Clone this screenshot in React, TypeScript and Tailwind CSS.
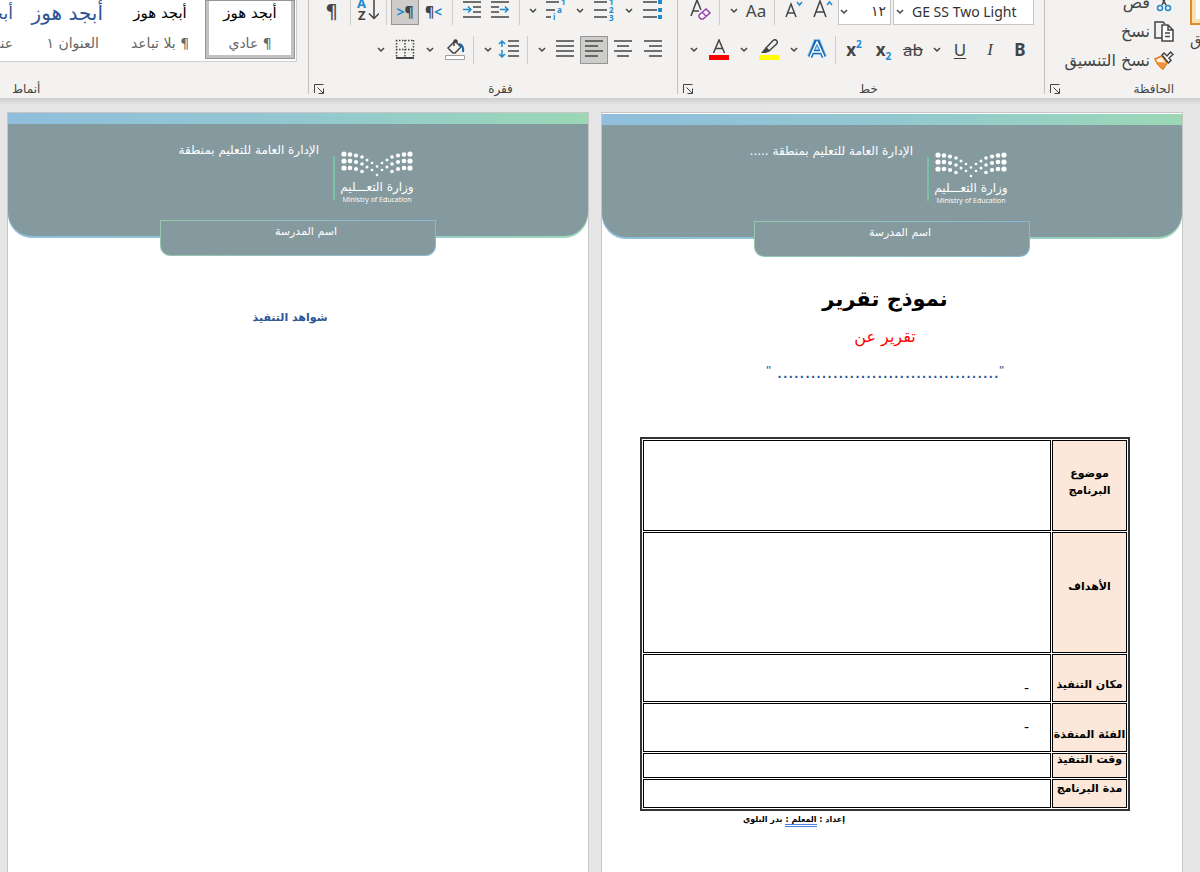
import React from 'react';

const DARK = '#444444';
const BLUE = '#1e8bcd';

interface IconProps {
    children: React.ReactNode;
    w?: number;
    h?: number;
}

const Icon: React.FC<IconProps> = ({ children, w = 22, h = 22 }) => (
    <svg width={w} height={h} viewBox={`0 0 ${w} ${h}`} fill="none" stroke={DARK} strokeWidth="1.5" className="shrink-0" aria-hidden="true">
        {children}
    </svg>
);

const Chevron = () => (
    <svg width="8" height="6" viewBox="0 0 8 6" fill="none" stroke={DARK} strokeWidth="1.5" className="shrink-0" aria-hidden="true">
        <path d="M1 1l3 3 3-3" />
    </svg>
);

interface ToolProps {
    label: string;
    className: string;
    active?: boolean;
    children: React.ReactNode;
}

const Tool: React.FC<ToolProps> = ({ label, className, active, children }) => (
    <button
        type="button"
        aria-label={label}
        aria-pressed={active}
        className={`flex h-7 shrink-0 items-center justify-center ${active ? 'border border-[#969696] bg-[#cfcdcb]' : ''} ${className}`}
    >
        {children}
    </button>
);

const Divider: React.FC<{ className: string }> = ({ className }) => (
    <span className={`flex h-7 shrink-0 justify-center ${className}`}>
        <span className="w-px bg-[#d0cecc]" />
    </span>
);

const Launcher: React.FC<{ label: string }> = ({ label }) => (
    <button type="button" aria-label={label} className="ml-[5px] shrink-0">
        <svg width="10" height="10" viewBox="0 0 10 10" fill="none" stroke={DARK} aria-hidden="true">
            <path d="M.5 9V.5H9.5M3.500 3.500L9 9M9.500 4.500V9.500H4.500" />
        </svg>
    </button>
);

interface GroupProps {
    title: string;
    className: string;
    titleClass: string;
    launcher?: boolean;
    children: React.ReactNode;
}

const Group: React.FC<GroupProps> = ({ title, className, titleClass, launcher, children }) => (
    <section className={`flex flex-col justify-between ${className}`} aria-label={title}>
        {children}
        <div className="flex h-[10px] items-center text-[12px] leading-[10px] text-[#444444]">
            <span className={`flex-1 ${titleClass}`}>{title}</span>
            {launcher && <Launcher label={title} />}
        </div>
    </section>
);

const AlignIcon: React.FC<{ lines: number[][] }> = ({ lines }) => (
    <Icon>
        {lines.map(([from, to], i) => (
            <path key={i} d={`M${from} ${2 + i * 5}H${to}`} />
        ))}
    </Icon>
);

const Clipboard = () => (
    <Group title="الحافظة" className="w-[156px] border-l border-[#c3c1bf]" titleClass="pr-[26px]" launcher>
        <div className="flex justify-start">
            <button type="button" className="flex w-[10px] shrink-0 flex-col items-start overflow-hidden text-[15px] leading-5 text-[#444444]">
                <span className="h-[25px] w-full shrink-0 border-b-2 border-l-2 border-[#e08a2e] bg-[#fbe3b0] pb-1 pl-1">
                    <span className="block h-full bg-white" />
                </span>
                <span className="mt-[6px] self-end whitespace-nowrap" dir="ltr">
                    ق
                </span>
            </button>
            <div className="-mt-3 mr-4 flex flex-col text-[16px] text-[#444444]">
                <button type="button" className="flex h-[29px] items-center gap-1 whitespace-nowrap">
                    <Icon w={20}>
                        <path d="M5 1l7 12M14 1L8 13" />
                        <circle cx="6" cy="16" r="2.500" stroke={BLUE} />
                        <circle cx="14" cy="16" r="2.500" stroke={BLUE} />
                    </Icon>
                    قص
                </button>
                <button type="button" className="flex h-[29px] items-center gap-1 whitespace-nowrap">
                    <Icon w={20}>
                        <path d="M8 17H1V1h8l2 2" />
                        <path d="M8 4h6l5 5v11H8zM14 4v5h5M11 12h5M11 15.500h5" fill="#fff" />
                    </Icon>
                    نسخ
                </button>
                <button type="button" className="flex h-[29px] items-center gap-1 whitespace-nowrap">
                    <Icon w={20}>
                        <path d="M1 9l7-3 5 7-4 6q-5-3-8-10z" fill="#fdf0dc" stroke="#e07b1a" />
                        <path d="M3 12l9 0.500-3 6q-4-2-6-6.500z" fill="#f0923a" stroke="none" />
                        <path d="M8 5l2-2 3 3 3.500-4 2.500 2.500-4 3.500 2 2.500-2.500 2.500z" fill="#fff" />
                    </Icon>
                    نسخ التنسيق
                </button>
            </div>
        </div>
    </Group>
);

const FontGroup = () => (
    <Group title="خط" className="w-[367px] border-l border-[#c3c1bf]" titleClass="text-center" launcher>
        <div className="-mt-[3px] flex flex-col gap-[11px]">
            <div className="flex pr-[10px]">
                <div className="relative">
                    <select
                        aria-label="الخط"
                        dir="ltr"
                        className="h-7 w-[141px] appearance-none border border-[#c8c6c4] bg-white pl-[18px] font-['Noto_Sans','DejaVu_Sans',sans-serif] text-[14px] text-[#333333]"
                    >
                        <option>GE SS Two Light</option>
                    </select>
                    <span className="pointer-events-none absolute top-3 left-[3px]">
                        <Chevron />
                    </span>
                </div>
                <div className="relative mr-[2px]">
                    <select
                        aria-label="حجم الخط"
                        className="h-7 w-[53px] appearance-none border border-[#c8c6c4] bg-white pr-1 text-[14px] text-[#333333]"
                    >
                        <option>١٢</option>
                    </select>
                    <span className="pointer-events-none absolute top-3 left-[2px]">
                        <Chevron />
                    </span>
                </div>
                <Tool label="تكبير الخط" className="w-[30px]">
                    <Icon>
                        <path d="M2 17L8 1l6 16M4 12h8" />
                        <path d="M15 5l2.500-3L20 5" stroke={BLUE} />
                    </Icon>
                </Tool>
                <Tool label="تصغير الخط" className="w-[29px]">
                    <Icon>
                        <path d="M3 17L8 4l5 13M5 13h6" />
                        <path d="M14 2l2.500 3L19 2" stroke={BLUE} />
                    </Icon>
                </Tool>
                <Divider className="w-[9px]" />
                <Tool label="تغيير حالة الأحرف" className="w-7">
                    <span className="font-['Noto_Sans',sans-serif] text-[17px] text-[#444444]">Aa</span>
                </Tool>
                <Tool label="خيارات حالة الأحرف" className="w-[17px]">
                    <Chevron />
                </Tool>
                <Divider className="w-[11px]" />
                <Tool label="مسح التنسيق" className="w-[27px]">
                    <Icon>
                        <path d="M1 16L7 0l4 10M3 11h6" />
                        <path d="M9 15l7-6 4 4-7 6h-2l-2-2zM12 12l4 4" stroke="#9b3fb0" fill="#fff" />
                    </Icon>
                </Tool>
            </div>
            <div className="flex pr-[9px] font-['Noto_Sans',sans-serif] text-[17px] leading-6 text-[#444444]">
                <Tool label="غامق" className="w-[30px] font-bold">
                    B
                </Tool>
                <Tool label="مائل" className="w-[30px] font-['Liberation_Serif',serif] italic">
                    I
                </Tool>
                <Tool label="تسطير" className="w-[30px] underline underline-offset-2">
                    U
                </Tool>
                <Tool label="خيارات التسطير" className="w-[17px]">
                    <Chevron />
                </Tool>
                <Tool label="يتوسطه خط" className="w-[30px] line-through">
                    ab
                </Tool>
                <Tool label="منخفض" className="w-[29px] font-bold">
                    <span dir="ltr" className="flex">
                        x<sub className="static self-end text-[10px] leading-3 text-[#1e8bcd]">2</sub>
                    </span>
                </Tool>
                <Tool label="مرتفع" className="w-[30px] font-bold">
                    <span dir="ltr" className="flex">
                        x<sup className="static self-start text-[10px] leading-3 text-[#1e8bcd]">2</sup>
                    </span>
                </Tool>
                <Divider className="w-2" />
                <Tool label="تأثيرات النص" className="w-[29px]">
                    <Icon>
                        <path d="M4 18L10 3h2l6 15M7 13h8" stroke="#8cc4ee" strokeWidth="6" />
                        <path d="M4 18L10 3h2l6 15M7 13h8" stroke="#1467b3" strokeWidth="4" />
                        <path d="M4 18L11 3l7 15M7 13h8" stroke="#fff" strokeWidth="1.500" />
                    </Icon>
                </Tool>
                <Tool label="خيارات تأثيرات النص" className="w-[17px]">
                    <Chevron />
                </Tool>
                <Tool label="لون التمييز" className="w-[33px]">
                    <Icon>
                        <path d="M8 9l7-7.500q2-1.500 3.500 0t0 3.500L11 12z" />
                        <path d="M8 8l4 4-4 2H3z" fill={DARK} stroke="none" />
                        <path d="M1 18.500h20" stroke="#ffff00" strokeWidth="5" />
                    </Icon>
                </Tool>
                <Tool label="خيارات لون التمييز" className="w-[17px]">
                    <Chevron />
                </Tool>
                <Tool label="لون الخط" className="w-[33px]">
                    <Icon>
                        <path d="M5.500 14L11 1l5.500 13M7.500 9.500h7" />
                        <path d="M1 18.500h20" stroke="#ff0000" strokeWidth="5" />
                    </Icon>
                </Tool>
                <Tool label="خيارات لون الخط" className="w-4">
                    <Chevron />
                </Tool>
            </div>
        </div>
    </Group>
);

const markText = {
    fill: BLUE,
    stroke: 'none',
    fontFamily: 'Noto Sans, sans-serif',
    fontSize: 8,
    fontWeight: 700,
    direction: 'ltr' as const,
};

const ParagraphGroup = () => (
    <Group title="فقرة" className="w-[369px] border-l border-[#c3c1bf]" titleClass="text-center" launcher>
        <div className="-mt-[3px] flex flex-col gap-[11px]">
            <div className="flex pr-[9px]">
                <Tool label="تعداد نقطي" className="w-[30px]">
                    <Icon>
                        <path d="M1 2h14M1 10h14M1 17h14" />
                        <path d="M16 0h4v4h-4zM16 8h4v4h-4zM16 15h4v4h-4z" fill={BLUE} stroke="none" />
                    </Icon>
                </Tool>
                <Tool label="خيارات التعداد النقطي" className="w-[19px]">
                    <Chevron />
                </Tool>
                <Tool label="تعداد رقمي" className="w-[30px]">
                    <Icon>
                        <path d="M1 2h13M1 10h13M1 17h13" />
                        <text x="16" y="5" {...markText}>1</text>
                        <text x="16" y="13" {...markText}>2</text>
                        <text x="16" y="21" {...markText}>3</text>
                    </Icon>
                </Tool>
                <Tool label="خيارات التعداد الرقمي" className="w-[19px]">
                    <Chevron />
                </Tool>
                <Tool label="قائمة متعددة المستويات" className="w-[29px]">
                    <Icon>
                        <path d="M1 2h13M1 10h9M1 17h5" />
                        <text x="16" y="5" {...markText}>1</text>
                        <text x="12" y="13" {...markText}>a</text>
                        <text x="8" y="20" {...markText}>i</text>
                    </Icon>
                </Tool>
                <Tool label="خيارات القائمة" className="w-4">
                    <Chevron />
                </Tool>
                <Divider className="w-3" />
                <Tool label="إنقاص المسافة البادئة" className="w-[27px]">
                    <Icon>
                        <path d="M2 2h18M2 7h8M2 12h8M2 17h18" />
                        <path d="M11 9.500h8M16 6.500l3 3-3 3" stroke={BLUE} />
                    </Icon>
                </Tool>
                <Tool label="زيادة المسافة البادئة" className="w-[29px]">
                    <Icon>
                        <path d="M2 2h18M12 7h8M12 12h8M2 17h18" />
                        <path d="M2 9.500h8M7 6.500l3 3-3 3" stroke={BLUE} />
                    </Icon>
                </Tool>
                <Divider className="w-[9px]" />
                <Tool label="من اليسار إلى اليمين" className="w-[29px]">
                    <span dir="ltr" className="flex items-center font-['Noto_Sans',sans-serif] text-[14px] font-bold text-[#444444]">
                        ¶<span className="text-[#1e8bcd]">&lt;</span>
                    </span>
                </Tool>
                <Tool label="من اليمين إلى اليسار" className="w-7" active>
                    <span dir="ltr" className="flex items-center font-['Noto_Sans',sans-serif] text-[14px] font-bold text-[#444444]">
                        <span className="text-[#1e8bcd]">&gt;</span>¶
                    </span>
                </Tool>
                <Divider className="w-[9px]" />
                <Tool label="فرز" className="w-[28px]">
                    <Icon>
                        <path d="M17 0v18M12 13.500l5 5 5-5" />
                        <text x="0" y="8" {...markText} fontSize={13}>A</text>
                        <text x="1" y="20" {...markText} fontSize={13} fill={DARK}>Z</text>
                    </Icon>
                </Tool>
                <Divider className="w-2" />
                <Tool label="إظهار الكل" className="w-[29px]">
                    <span className="font-['DejaVu_Sans',sans-serif] text-[20px] leading-5 text-[#444444]">¶</span>
                </Tool>
            </div>
            <div className="flex pr-[9px]">
                <Tool label="محاذاة إلى اليمين" className="w-[30px]">
                    <AlignIcon lines={[[2, 20], [7, 20], [2, 20], [7, 20]]} />
                </Tool>
                <Tool label="توسيط" className="w-[30px]">
                    <AlignIcon lines={[[2, 20], [5, 17], [2, 20], [5, 17]]} />
                </Tool>
                <Tool label="محاذاة إلى اليسار" className="w-7" active>
                    <AlignIcon lines={[[2, 20], [2, 15], [2, 20], [2, 15]]} />
                </Tool>
                <Tool label="ضبط" className="w-[31px]">
                    <AlignIcon lines={[[2, 20], [2, 20], [2, 20], [2, 20]]} />
                </Tool>
                <Tool label="خيارات الضبط" className="w-[15px]">
                    <Chevron />
                </Tool>
                <Divider className="w-[13px]" />
                <Tool label="تباعد الأسطر" className="w-6">
                    <Icon>
                        <path d="M10 2h11M10 7h11M10 12h11M10 17h11" />
                        <path d="M4 2v6M1 5l3-3 3 3M4 11v7M1 15l3 3 3-3" stroke={BLUE} />
                    </Icon>
                </Tool>
                <Tool label="خيارات التباعد" className="w-[18px]">
                    <Chevron />
                </Tool>
                <Divider className="w-[11px]" />
                <Tool label="تظليل" className="w-[27px]">
                    <Icon>
                        <path d="M4 9l7-7 6 6-6 6H9zM10 7V2q1.500-2 3 0v3" />
                        <path d="M15 5q5 1 4 8" stroke="#1467b3" strokeWidth="2" />
                        <path d="M1.500 16.500h19v4h-19z" fill="#fff" stroke="#a0a0a0" strokeWidth="1" />
                    </Icon>
                </Tool>
                <Tool label="خيارات التظليل" className="w-[22px]">
                    <Chevron />
                </Tool>
                <Tool label="حدود" className="w-7">
                    <Icon>
                        <path d="M2 1.500h18M2 10.500h18M2.500 1v18M11 1v18M19.500 1v18" strokeDasharray="1.5 1.5" />
                        <path d="M2 19h18" strokeWidth="2" />
                    </Icon>
                </Tool>
                <Tool label="خيارات الحدود" className="w-5">
                    <Chevron />
                </Tool>
            </div>
        </div>
    </Group>
);

const styleCards = [
    { sample: 'أبجد هوز', name: '¶ عادي', look: 'text-[15px] text-black' },
    { sample: 'أبجد هوز', name: '¶ بلا تباعد', look: 'text-[15px] text-black' },
    { sample: 'أبجد هوز', name: 'العنوان ١', look: 'text-[20px] text-[#2f5496]' },
    { sample: 'أبجد هوز', name: 'عنوان ٢', look: 'text-[17px] text-[#2f5496]' },
];

const StylesGroup = () => (
    <Group title="أنماط" className="min-w-0 flex-1 overflow-hidden" titleClass="pl-3 text-left">
        <div className="mr-[11px] flex overflow-hidden border-r border-b border-[#d0cecc] bg-white pr-px pb-[2px]">
            {styleCards.map((card, i) => (
                <button
                    key={card.name}
                    type="button"
                    className={`flex h-[59px] w-[90px] shrink-0 flex-col overflow-hidden border-x-4 border-b-4 whitespace-nowrap ${
                        i === 0 ? 'border-[#c3c1bf] outline-1 -outline-offset-1 outline-[#969696]' : 'border-transparent'
                    } ${i < 2 ? 'items-center' : 'items-start pr-2'}`}
                >
                    <span className={`h-8 shrink-0 leading-[26px] ${card.look}`}>{card.sample}</span>
                    <span className={`shrink-0 text-[14px] leading-[22px] text-[#666666] ${i === 2 ? 'pr-1' : ''}`}>{card.name}</span>
                </button>
            ))}
        </div>
    </Group>
);

// Dot columns of the ministry emblem, from the outer edge to the middle
const emblemColumns = [
    { x: 3, ys: [3, 10, 17], r: 2.6 },
    { x: 9, ys: [3.5, 10, 17], r: 2.3 },
    { x: 15, ys: [4.5, 11, 18], r: 2.1 },
    { x: 21, ys: [6, 13, 20.5], r: 1.8 },
    { x: 26, ys: [9, 16], r: 1.5 },
    { x: 31, ys: [12, 19], r: 1.3 },
    { x: 36, ys: [15.5, 24], r: 1.3 },
];

const Emblem = () => (
    <svg width="72" height="26" viewBox="0 0 72 26" fill="#fff" aria-hidden="true">
        {emblemColumns.map(({ x, ys, r }) =>
            ys.map((y) => (
                <g key={`${x}-${y}`}>
                    <circle cx={x} cy={y} r={r} />
                    {x !== 36 && <circle cx={72 - x} cy={y} r={r} />}
                </g>
            ))
        )}
    </svg>
);

const Letterhead: React.FC<{ region: string }> = ({ region }) => (
    <header className="flex flex-col items-center text-white">
        <div className="w-full rounded-b-3xl bg-linear-to-r from-[#90bedc] via-[#93c7d0] to-[#9bd8b5] pt-[11px] pb-[2px]">
            <div className="flex h-[112px] items-start rounded-b-3xl bg-[#849a9f] pr-[175px]">
                <div className="mt-[27px] flex w-[72px] shrink-0 flex-col items-center whitespace-nowrap">
                    <Emblem />
                    <span className="mt-[2px] text-[12px] leading-4">وزارة التعـــليم</span>
                    <span dir="ltr" className="font-['Open_Sans',sans-serif] text-[7px] leading-[10px]">
                        Ministry of Education
                    </span>
                </div>
                <span className="mt-8 mr-[6px] h-11 w-[2px] shrink-0 bg-[#78c3a5]" />
                <p className="mt-4 mr-[14px] text-[12px] leading-5 whitespace-nowrap">{region}</p>
            </div>
        </div>
        <div className="-mt-[18px] w-[276px] rounded-b-[10px] bg-linear-to-r from-[#96c8ad] to-[#8ab9d6] p-px">
            <p className="h-[34px] rounded-b-[9px] bg-[#849a9f] pr-[98px] text-[11px] leading-[22px]">اسم المدرسة</p>
        </div>
    </header>
);

const rows = [
    { label: 'موضوع البرنامج', height: 'h-[91px]', labelPos: 'align-middle pb-2', value: '', valuePos: '' },
    { label: 'الأهداف', height: 'h-[121px]', labelPos: 'align-middle pb-3', value: '', valuePos: '' },
    { label: 'مكان التنفيذ', height: 'h-12', labelPos: 'align-bottom pb-2', value: '-', valuePos: 'align-bottom pb-1' },
    { label: 'الفئة المنفذة', height: 'h-[49px]', labelPos: 'align-bottom pb-2', value: '-', valuePos: 'align-middle' },
    { label: 'وقت التنفيذ', height: 'h-[25px]', labelPos: 'align-top', value: '', valuePos: '' },
    { label: 'مدة البرنامج', height: 'h-[29px]', labelPos: 'align-top', value: '', valuePos: '' },
];

const ReportPage = () => (
    <article className="min-w-0 flex-1 border border-b-0 border-[#c6c6c6] bg-white pt-px">
        <Letterhead region="الإدارة العامة للتعليم بمنطقة ....." />
        <div className="flex flex-col pr-[52px] pl-[38px]">
            <h1 className="mt-6 self-center text-[21px] leading-9 font-bold text-black">نموذج تقرير</h1>
            <h2 className="mt-[6px] self-center text-[16px] leading-7 text-[#ff0000]">تقرير عن</h2>
            <p dir="ltr" className="mt-2 flex justify-center font-['Liberation_Sans',sans-serif] leading-6 text-[#2f5496]">
                <span className="mr-[6px] text-[13px]">"</span>
                <span className="text-[20px]">........................................</span>
                <span className="text-[13px]">"</span>
            </p>
            <table className="mt-[54px] w-full table-fixed border-separate border-spacing-px border-2 border-[#333333] text-black">
                <tbody>
                    {rows.map((row) => (
                        <tr key={row.label} className={row.height}>
                            <th scope="row" className={`w-[75px] border border-black bg-[#fbe8da] px-0 pt-0 text-[11px] leading-[17px] ${row.labelPos}`}>
                                {row.height === 'h-[25px]' ? (
                                    <span className="flex h-[14px] items-end justify-center overflow-hidden whitespace-nowrap">{row.label}</span>
                                ) : (
                                    <span className="block">{row.label}</span>
                                )}
                            </th>
                            <td className={`border border-black py-0 pr-[21px] text-[14px] leading-[17px] ${row.valuePos}`}>{row.value}</td>
                        </tr>
                    ))}
                </tbody>
            </table>
            <p className="mt-[2px] mr-[285px] text-[8px] leading-[14px] font-bold whitespace-nowrap text-black">
                إعداد : <span className="border-b-3 border-double border-[#4a7fe0]">المعلم :</span> بدر البلوي
            </p>
        </div>
    </article>
);

const EvidencePage = () => (
    <article className="min-w-0 flex-1 border border-b-0 border-[#c6c6c6] bg-white">
        <Letterhead region="الإدارة العامة للتعليم بمنطقة" />
        <h2 className="mt-[50px] pr-4 text-center text-[11px] leading-6 font-bold text-[#2f5496]">شواهد التنفيذ</h2>
    </article>
);

const App = () => (
    <div dir="rtl" className="flex h-screen flex-col overflow-hidden bg-[#e6e6e6] font-['DejaVu_Sans',sans-serif]">
        <div className="flex h-[99px] shrink-0 overflow-hidden border-b border-[#d2d0ce] bg-[#f3f2f1] pb-1">
            <Clipboard />
            <FontGroup />
            <ParagraphGroup />
            <StylesGroup />
        </div>
        <div className="h-[13px] shrink-0 bg-linear-to-b from-[#d2d2d2] to-[#e6e6e6] to-50%" />
        <main className="flex flex-1 gap-3 pr-[17px] pl-[7px]">
            <ReportPage />
            <EvidencePage />
        </main>
    </div>
);

export default App;
